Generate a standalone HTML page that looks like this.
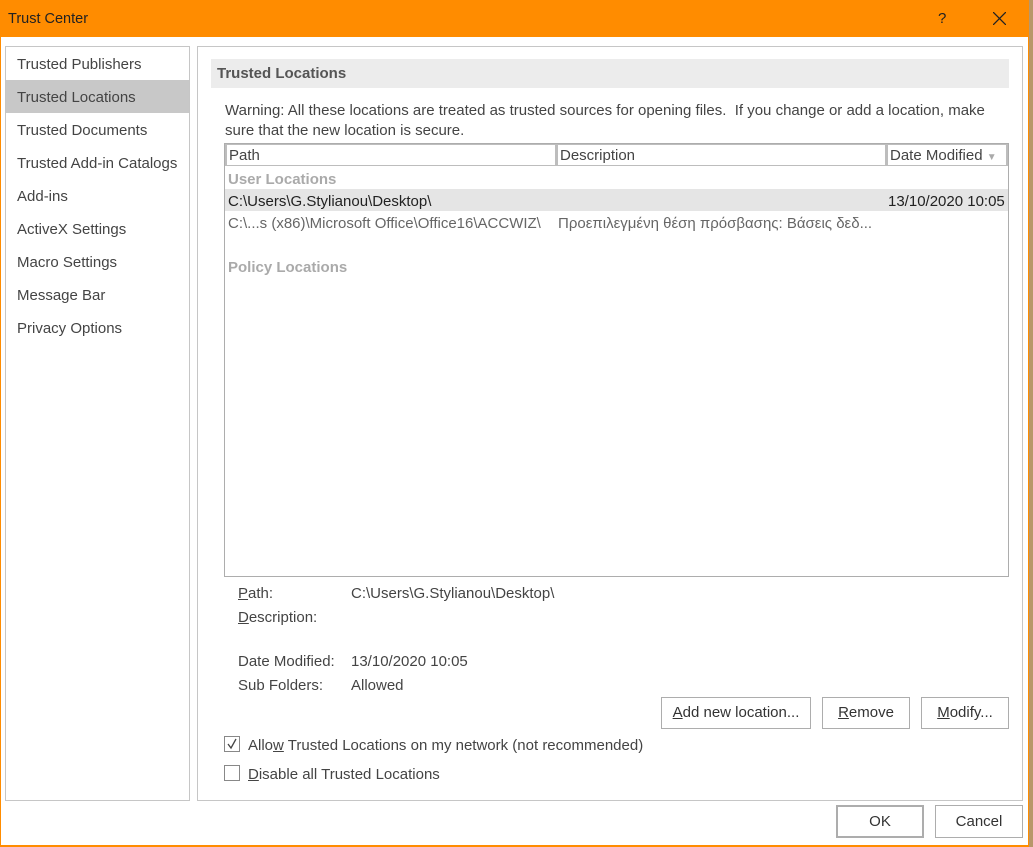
<!DOCTYPE html>
<html><head><meta charset="utf-8"><style>
*{margin:0;padding:0;box-sizing:border-box}
body{width:1033px;height:847px;background:#fff;font-family:"Liberation Sans",sans-serif;font-size:15px;color:#444;position:relative;overflow:hidden}
.a{position:absolute;white-space:nowrap}
.title{left:0;top:0;width:1029px;height:37px;background:#ff8c00}
.btn{position:absolute;border:1px solid #adadad;background:#fff;text-align:center;line-height:30px;color:#333}
u{text-decoration:underline}
</style></head><body>
<div class="a" style="left:1029px;top:0;width:4px;height:847px;background:#b8976a"></div>
<div class="a" style="left:0;top:0;width:1px;height:847px;background:#ff8c00"></div>
<div class="a" style="left:1028px;top:0;width:1px;height:847px;background:#ff8c00"></div>
<div class="a" style="left:0;top:845px;width:1029px;height:2px;background:#ff8c00"></div>
<div class="a title"></div>
<div class="a" style="left:8px;top:11px;color:#222;font-size:14.5px">Trust Center</div>
<div class="a" style="left:938px;top:10px;color:#222;font-size:15px">?</div>
<svg class="a" style="left:993px;top:12px" width="13" height="13"><path d="M0 0L13 13M13 0L0 13" stroke="#222" stroke-width="1.3"/></svg>

<div class="a" style="left:5px;top:46px;width:185px;height:755px;border:1px solid #c6c6c6"></div>
<div class="a" style="left:6px;top:80px;width:183px;height:33px;background:#c8c8c8"></div>
<div class="a" style="left:17px;top:56px;line-height:17px">Trusted Publishers</div>
<div class="a" style="left:17px;top:89px;line-height:17px">Trusted Locations</div>
<div class="a" style="left:17px;top:122px;line-height:17px">Trusted Documents</div>
<div class="a" style="left:17px;top:155px;line-height:17px">Trusted Add-in Catalogs</div>
<div class="a" style="left:17px;top:188px;line-height:17px">Add-ins</div>
<div class="a" style="left:17px;top:221px;line-height:17px">ActiveX Settings</div>
<div class="a" style="left:17px;top:254px;line-height:17px">Macro Settings</div>
<div class="a" style="left:17px;top:287px;line-height:17px">Message Bar</div>
<div class="a" style="left:17px;top:320px;line-height:17px">Privacy Options</div>

<div class="a" style="left:197px;top:46px;width:826px;height:755px;border:1px solid #c6c6c6"></div>
<div class="a" style="left:211px;top:59px;width:798px;height:29px;background:#ececec"></div>
<div class="a" style="left:217px;top:65px;font-weight:bold;color:#555">Trusted Locations</div>
<div class="a" style="left:225px;top:101px;line-height:20px;color:#444">Warning: All these locations are treated as trusted sources for opening files.&nbsp; If you change or add a location, make<br>sure that the new location is secure.</div>

<div class="a" style="left:224px;top:143px;width:785px;height:434px;border:1px solid #adadad"></div>
<div class="a" style="left:225px;top:144px;width:783px;height:22px;background:#bdbdbd"></div>
<div class="a" style="left:227px;top:145px;width:328px;height:20px;background:#fff;padding-left:2px;line-height:21px">Path</div>
<div class="a" style="left:558px;top:145px;width:327px;height:20px;background:#fff;padding-left:2px;line-height:21px">Description</div>
<div class="a" style="left:888px;top:145px;width:118px;height:20px;background:#fff;padding-left:2px;line-height:21px">Date Modified <span style="color:#aaa;font-size:10px">▼</span></div>
<div class="a" style="left:228px;top:171px;color:#aaa;font-weight:bold">User Locations</div>
<div class="a" style="left:225px;top:189px;width:783px;height:22px;background:#e5e5e5"></div>
<div class="a" style="left:228px;top:193px;color:#222">C:\Users\G.Stylianou\Desktop\</div>
<div class="a" style="left:888px;top:193px;color:#222">13/10/2020 10:05</div>
<div class="a" style="left:228px;top:215px;color:#666">C:\...s (x86)\Microsoft Office\Office16\ACCWIZ\</div>
<div class="a" style="left:558px;top:215px;color:#666">Προεπιλεγμένη θέση πρόσβασης: Βάσεις δεδ...</div>
<div class="a" style="left:228px;top:259px;color:#aaa;font-weight:bold">Policy Locations</div>

<div class="a" style="left:238px;top:585px"><u>P</u>ath:</div>
<div class="a" style="left:351px;top:585px">C:\Users\G.Stylianou\Desktop\</div>
<div class="a" style="left:238px;top:609px"><u>D</u>escription:</div>
<div class="a" style="left:238px;top:653px">Date Modified:</div>
<div class="a" style="left:351px;top:653px">13/10/2020 10:05</div>
<div class="a" style="left:238px;top:677px">Sub Folders:</div>
<div class="a" style="left:351px;top:677px">Allowed</div>

<div class="btn" style="left:661px;top:697px;width:150px;height:32px"><u>A</u>dd new location...</div>
<div class="btn" style="left:822px;top:697px;width:88px;height:32px"><u>R</u>emove</div>
<div class="btn" style="left:921px;top:697px;width:88px;height:32px"><u>M</u>odify...</div>

<div class="a" style="left:224px;top:736px;width:16px;height:16px;border:1px solid #888"></div>
<svg class="a" style="left:226px;top:738px" width="12" height="12"><path d="M2 6L5 10L10 1" stroke="#444" stroke-width="1.3" fill="none"/></svg>
<div class="a" style="left:248px;top:737px">Allo<u>w</u> Trusted Locations on my network (not recommended)</div>
<div class="a" style="left:224px;top:765px;width:16px;height:16px;border:1px solid #888"></div>
<div class="a" style="left:248px;top:766px"><u>D</u>isable all Trusted Locations</div>

<div class="btn" style="left:836px;top:805px;width:88px;height:33px;border:2px solid #adadad">OK</div>
<div class="btn" style="left:935px;top:805px;width:88px;height:33px;line-height:31px">Cancel</div>
</body></html>
